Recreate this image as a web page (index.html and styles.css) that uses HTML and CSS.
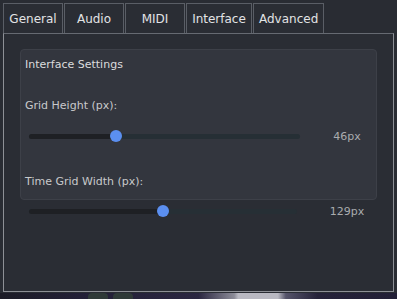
FILE: index.html
```html
<!DOCTYPE html>
<html lang="en">

<head>
    <meta charset="UTF-8">
    <meta name="viewport" content="width=device-width, initial-scale=1.0">
    <title>Settings</title>
    <link rel="stylesheet" href="styles.css">
</head>

<body>
    <div class="window">
        <div class="tabs">
            <div class="tab">General</div>
            <div class="tab">Audio</div>
            <div class="tab">MIDI</div>
            <div class="tab active">Interface</div>
            <div class="tab">Advanced</div>
        </div>
        <div class="pane">
            <div class="group">
                <div class="group-title">Interface Settings</div>
                <div class="label">Grid Height (px):</div>
                <div class="slider-row">
                    <div class="track">
                        <div class="fill" style="width: 32%"></div>
                        <div class="thumb" style="left: 32%"></div>
                    </div>
                    <div class="value">46px</div>
                </div>
                <div class="label">Time Grid Width (px):</div>
            </div>
            <div class="slider-row slider-out">
                <div class="track">
                    <div class="fill" style="width: 50%"></div>
                    <div class="thumb" style="left: 50%"></div>
                </div>
                <div class="value">129px</div>
            </div>
        </div>
    </div>
    <div class="taskbar">
        <span class="pill"></span>
        <span class="pill"></span>
    </div>
</body>

</html>
```

FILE: styles.css
```css
* {
    margin: 0;
    padding: 0;
    box-sizing: border-box;
}

body {
    width: 397px;
    height: 299px;
    background: #292c33;
    font-family: "DejaVu Sans", Verdana, sans-serif;
    font-size: 11px;
    color: #c8c9cb;
    overflow: hidden;
    display: flex;
    flex-direction: column;
}

.window {
    flex: 1;
    display: flex;
    flex-direction: column;
    padding: 3px 3px 0 3px;
}

.tabs {
    display: flex;
    gap: 1px;
    height: 30px;
}

.tab {
    min-width: 60px;
    padding: 0 5px;
    border: 1px solid #5a5e66;
    border-bottom: none;
    display: flex;
    align-items: center;
    justify-content: center;
    font-size: 12px;
    color: #e2e3e5;
    background: #2a2d34;
}

.tab.active {
    min-width: 66px;
}

.pane {
    flex: 1;
    border: 1px solid #8d9096;
    border-top-color: #666a72;
    padding: 15px 16px 0 16px;
    background: #2a2d34;
}

.group {
    background: #33363e;
    border: 1px solid #3d4048;
    border-radius: 4px;
    padding: 8px 4px 10px 4px;
}

.group-title {
    color: #dcdcdd;
    line-height: 14px;
}

.label {
    line-height: 14px;
    margin-top: 27px;
}

.slider-row {
    display: flex;
    align-items: center;
    height: 12px;
    margin: 17px -5px 33px 4px;
}

.slider-out {
    margin: 5px 0 0 9px;
}

.slider-out .track {
    margin-right: 3px;
}

.track {
    flex: 1;
    height: 5px;
    border-radius: 3px;
    background: #262f35;
    position: relative;
}

.fill {
    height: 100%;
    border-radius: 3px;
    background: #1e2024;
}

.thumb {
    position: absolute;
    top: -4px;
    width: 12px;
    height: 12px;
    margin-left: -6px;
    border-radius: 50%;
    background: #5b8ff0;
}

.value {
    width: 60px;
    margin-left: 17px;
    text-align: center;
    color: #a9abae;
}

.taskbar {
    height: 6px;
    margin-top: 1px;
    background: linear-gradient(90deg, #1c1c26 0, #221f36 20%, #2a2640 50%, #8c8c98 59%, #b9b9c2 60%, #b9b9c2 70%, #55546a 72%, #252239 80%, #221f36 100%);
    display: flex;
    padding-left: 88px;
    gap: 5px;
}

.pill {
    width: 20px;
    height: 6px;
    border-radius: 4px 4px 0 0;
    background: #2f3a38;
}
```
